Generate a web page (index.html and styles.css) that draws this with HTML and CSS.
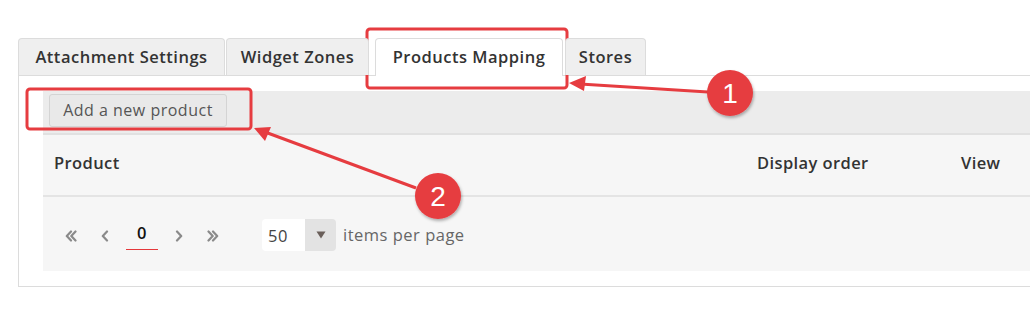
FILE: index.html
```html
<!DOCTYPE html>
<html lang="en">
<head>
    <meta charset="UTF-8">
    <meta name="viewport" content="width=device-width, initial-scale=1.0">
    <title>Products Mapping</title>
    <link rel="stylesheet" href="styles.css">
</head>
<body>
    <main class="page">
        <nav class="tabs">
            <a class="tab">Attachment Settings</a>
            <a class="tab">Widget Zones</a>
            <a class="tab active">Products Mapping</a>
            <a class="tab">Stores</a>
        </nav>
        <section class="panel">
            <div class="grid">
                <div class="toolbar">
                    <button class="btn">Add a new product</button>
                </div>
                <div class="grid-head">
                    <span>Product</span>
                    <span>Display order</span>
                    <span>View</span>
                </div>
                <div class="pager">
                    <span class="pg-link">
                        <svg width="12" height="12" viewBox="0 0 12 12"><path d="M6 1.5 1.8 6 6 10.5M10.5 1.5 6.3 6l4.2 4.5"/></svg>
                    </span>
                    <span class="pg-link">
                        <svg width="12" height="12" viewBox="0 0 12 12"><path d="M8 1.5 3.8 6 8 10.5"/></svg>
                    </span>
                    <span class="pg-current">0</span>
                    <span class="pg-link">
                        <svg width="12" height="12" viewBox="0 0 12 12"><path d="M4 1.5 8.2 6 4 10.5"/></svg>
                    </span>
                    <span class="pg-link">
                        <svg width="12" height="12" viewBox="0 0 12 12"><path d="M1.5 1.5 5.7 6 1.5 10.5M6 1.5 10.2 6 6 10.5"/></svg>
                    </span>
                    <div class="page-size">
                        <span class="size-value">50</span>
                        <span class="size-arrow">
                            <svg width="10" height="8" viewBox="0 0 10 8"><path d="M0.5 0.5h9L5 7.5z"/></svg>
                        </span>
                    </div>
                    <span class="pg-label">items per page</span>
                </div>
            </div>
        </section>

        <svg class="notes" width="1030" height="319" viewBox="0 0 1030 319">
            <defs>
                <filter id="shade" x="-30%" y="-30%" width="160%" height="160%">
                    <feDropShadow dx="1" dy="2" stdDeviation="1.5" flood-color="#000" flood-opacity="0.3"/>
                </filter>
            </defs>
            <g fill="none" stroke="#e63c40" stroke-width="3">
                <rect x="367" y="29" width="200" height="59" rx="3"/>
                <rect x="27" y="89" width="224" height="40" rx="3"/>
                <line x1="708" y1="92" x2="580" y2="84"/>
                <line x1="416" y1="188" x2="265" y2="132"/>
            </g>
            <g fill="#e63c40">
                <polygon points="569,83 586,76 584,91"/>
                <polygon points="254,128 271,127 265,141"/>
            </g>
            <g filter="url(#shade)" fill="#e63c40">
                <circle cx="730" cy="93" r="23"/>
                <circle cx="438" cy="196" r="23"/>
            </g>
            <g class="note-num" fill="#fff" text-anchor="middle">
                <text x="730" y="103">1</text>
                <text x="438" y="206">2</text>
            </g>
        </svg>
    </main>
</body>
</html>
```

FILE: styles.css
```css
* {
    margin: 0;
    padding: 0;
    box-sizing: border-box;
}

body {
    background-color: #fff;
    font-family: "Open Sans", sans-serif;
    color: #333;
    overflow: hidden;
}

.page {
    position: relative;
    width: 1030px;
    height: 319px;
    padding: 38px 0 0 18px;
    overflow: hidden;
}

.tabs {
    display: flex;
    gap: 1px;
    height: 37px;
    position: relative;
    z-index: 1;
}

.tab {
    display: flex;
    align-items: center;
    justify-content: center;
    padding-bottom: 2px;
    background-color: #efefef;
    border: 1px solid #dcdcdc;
    border-bottom: none;
    border-radius: 4px 4px 0 0;
    font-size: 16.5px;
    font-weight: 600;
    letter-spacing: 0.5px;
    color: #333;
}

.tab:nth-child(1) { width: 207px; }
.tab:nth-child(2) { width: 143px; }
.tab:nth-child(3) { width: 188px; margin-left: 5px; }
.tab:nth-child(4) { width: 81px; margin-left: 1px; }

.tab.active {
    background-color: #fff;
    height: 38px;
    padding-bottom: 3px;
}

.panel {
    width: 1012px;
    border: 1px solid #dcdcdc;
    border-right: none;
    padding: 15px 0 15px 24px;
    background-color: #fff;
}

.grid {
    background-color: #f6f6f6;
}

.toolbar {
    background-color: #ececec;
    padding: 3px 6px 6px;
    border-bottom: 2px solid #e1e1e1;
}

.btn {
    height: 33px;
    width: 178px;
    padding-bottom: 2px;
    background-color: #e9e9e9;
    border: 1px solid #d4d4d4;
    border-radius: 3px;
    font-family: "Open Sans", sans-serif;
    font-size: 16px;
    letter-spacing: 0.5px;
    color: #555;
}

.grid-head {
    display: grid;
    grid-template-columns: 703px 204px 1fr;
    align-items: center;
    height: 62px;
    padding: 0 0 5px 11px;
    border-bottom: 2px solid #e4e4e4;
    font-size: 16.5px;
    font-weight: 600;
    letter-spacing: 0.4px;
    color: #333;
}

.pager {
    display: flex;
    align-items: center;
    height: 74px;
    padding: 0 0 0 11px;
    font-size: 16.5px;
    letter-spacing: 0.5px;
}

.pg-link {
    display: flex;
    justify-content: center;
    width: 34px;
    padding-top: 3px;
}

.pg-link svg {
    fill: none;
    stroke: #8a8a8a;
    stroke-width: 2.2;
    stroke-linecap: round;
    stroke-linejoin: round;
}

.pg-current {
    width: 32px;
    text-align: center;
    font-weight: 600;
    color: #111;
    padding-bottom: 5px;
    border-bottom: 1px solid #e5383b;
    margin: 2px 4px 0;
}

.page-size {
    display: flex;
    height: 32px;
    margin: 2px 0 0 32px;
    border-radius: 4px;
    overflow: hidden;
}

.size-value {
    display: flex;
    align-items: center;
    width: 43px;
    padding-left: 6px;
    background-color: #fff;
    color: #444;
}

.size-arrow {
    display: flex;
    align-items: center;
    justify-content: center;
    width: 31px;
    background-color: #e3e3e3;
}

.size-arrow svg {
    fill: #6a5f5a;
}

.pg-label {
    margin-left: 7px;
    color: #666;
}

.notes {
    position: absolute;
    top: 0;
    left: 0;
    pointer-events: none;
}

.note-num {
    font-family: "Liberation Sans", Arial, sans-serif;
    font-size: 28px;
}
```
